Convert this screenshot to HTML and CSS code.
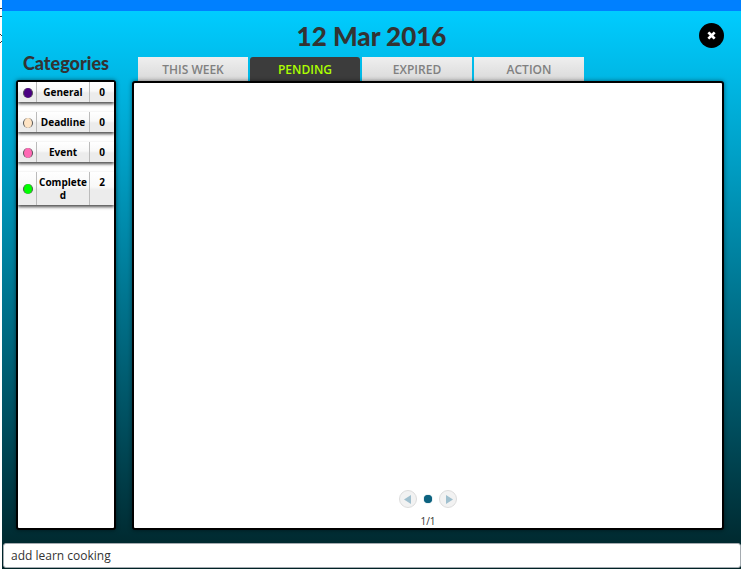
FILE: index.html
```
<!DOCTYPE html>
<html lang="en">
<head>
<meta charset="utf-8">
<title>Task planner</title>
<link rel="stylesheet" href="styles.css">
</head>
<body>
<div class="edge">
  <svg viewBox="0 0 2 60" width="2" height="60"><path d="M0 8.500h2M0 16.500h2M0 34.500h1M0 42.500h1M1.500 35v1M1.500 41v1"/></svg>
</div>
<div class="app">
  <header class="header">
    <h1>12 Mar 2016</h1>
    <button class="close" type="button" aria-label="Close">
      <svg viewBox="0 0 25 25" width="25" height="25"><circle cx="12.5" cy="12.5" r="12.5"/><path d="M9.500 9.500l6 6M15.500 9.500l-6 6"/></svg>
    </button>
  </header>
  <main class="content">
    <section class="side">
      <h2>Categories</h2>
      <div class="box">
        <table class="categories">
          <tbody>
            <tr><td><i class="dot general"></i></td><th scope="row">General</th><td>0</td></tr>
            <tr><td><i class="dot deadline"></i></td><th scope="row">Deadline</th><td>0</td></tr>
            <tr><td><i class="dot event"></i></td><th scope="row">Event</th><td>0</td></tr>
            <tr><td><i class="dot completed"></i></td><th scope="row">Completed</th><td>2</td></tr>
          </tbody>
        </table>
      </div>
    </section>
    <section class="tasks">
      <nav class="tabs">
        <button type="button">THIS WEEK</button>
        <button type="button" class="active">PENDING</button>
        <button type="button">EXPIRED</button>
        <button type="button">ACTION</button>
      </nav>
      <div class="box panel">
        <div class="pager">
          <button type="button" aria-label="Previous page"><svg viewBox="0 0 16 16"><path d="M11 4v9L4 8.500z"/></svg></button>
          <button type="button" class="page" aria-label="Page 1"></button>
          <button type="button" aria-label="Next page"><svg viewBox="0 0 16 16"><path d="M6 4v9l7-4.500z"/></svg></button>
        </div>
        <p class="count">1/1</p>
      </div>
    </section>
  </main>
  <div class="prompt">
    <input class="command" type="text" aria-label="Command" value="add learn cooking">
  </div>
</div>
</body>
</html>
```
FILE: styles.css
```
* {
  box-sizing: border-box;
}

body {
  margin: 0;
  min-height: 100vh;
  display: flex;
  background: #fff;
  font-family: "Open Sans", "Noto Sans", sans-serif;
  color: #333;
}

button {
  border: 0;
  padding: 0;
  background: none;
  font: inherit;
}

svg {
  display: block;
}

.edge {
  width: 2px;
  flex: none;
}

.edge path {
  fill: none;
  stroke: #333;
}

.app {
  flex: 1;
  min-width: 0;
  display: flex;
  flex-direction: column;
  border-top: 11px solid #0080ff;
  background: linear-gradient(#00ccff, #002226) padding-box;
}

.header {
  display: grid;
  grid-template-columns: 25px 1fr 25px;
  align-items: center;
  height: 46px;
  padding: 4px 17px 0;
}

h1,
h2 {
  margin: 0;
  font-family: Lato, "Open Sans", sans-serif;
  font-weight: 900;
  text-align: center;
}

h1 {
  grid-column: 2;
  font-size: 26px;
  line-height: 32px;
}

.close {
  margin-top: -2px;
}

.close svg {
  stroke: #fff;
  stroke-width: 3.5;
  stroke-linecap: square;
}

.close circle {
  fill: #000;
  stroke: none;
}

.close path {
  transform: scale(0.75);
  transform-origin: center;
}

.content {
  flex: 1;
  display: grid;
  grid-template-columns: 100px 1fr;
  gap: 16px;
  padding: 0 17px 13px 14px;
}

.side,
.tasks {
  display: flex;
  flex-direction: column;
  min-width: 0;
}

h2 {
  font-size: 18px;
  line-height: 13px;
  padding-bottom: 10px;
}

.box {
  flex: 1;
  background: #fff;
  border: 2px solid #000;
  border-radius: 3px;
  box-shadow: 0 0 4px rgba(0, 0, 0, 0.5);
}

.categories {
  width: 100%;
  table-layout: fixed;
  border-collapse: separate;
  border-spacing: 0 10px;
  margin: -10px 0;
  font-size: 10px;
  font-weight: 700;
  line-height: 13px;
  color: #000;
  text-align: center;
}

.categories tr {
  box-shadow: 0 2px 3px rgba(0, 0, 0, 0.7);
}

.categories td,
.categories th {
  padding: 4px 1px 3px;
  vertical-align: top;
  overflow-wrap: anywhere;
  background: linear-gradient(#fff, #f8f8f8 45%, #ececec 55%, #ececec);
  border-right: 1px solid #bbb;
}

.categories td:first-child {
  width: 19px;
  padding-left: 3px;
  vertical-align: middle;
}

.categories td:last-child {
  width: 24px;
  border-right: 0;
}

.dot {
  display: block;
  width: 10px;
  height: 10px;
  margin: 0 auto;
  border: solid #555;
  border-width: 0 1px;
  border-radius: 50%;
}

.general {
  background: #4b0082;
}

.deadline {
  background: #ffe4c4;
}

.event {
  background: #ff69b4;
}

.completed {
  background: #0f0;
}

.tabs {
  display: flex;
  gap: 2px;
  padding-left: 6px;
}

.tabs button {
  width: 110px;
  height: 24px;
  background: linear-gradient(#efefef, #d9d9d9);
  color: #808080;
  font-size: 12px;
  font-weight: 600;
}

.tabs .active {
  background: #3c3c3c;
  border-radius: 3px 3px 0 0;
  color: #adff00;
}

.panel {
  display: flex;
  flex-direction: column;
  justify-content: flex-end;
  align-items: center;
}

.pager {
  display: flex;
  align-items: center;
  gap: 7px;
}

.pager button {
  border: 1px solid #ddd;
  border-radius: 50%;
  background: #f2f2f2;
}

.pager svg {
  width: 16px;
  height: 16px;
  fill: #9fbfce;
}

.pager .page {
  width: 8px;
  height: 8px;
  border: 0;
  background: #0c627f;
  box-shadow: 0 0 1px #0c627f;
}

.count {
  margin: 6px 0 0;
  font-size: 10px;
  line-height: 14px;
}

.prompt {
  padding: 0 0 1px 1px;
}

.command {
  display: block;
  width: 100%;
  height: 25px;
  padding: 0 7px;
  border: 1px solid #a5abb0;
  border-radius: 3px;
  background: #fff;
  color: #333;
  font: 12px "Open Sans", "Noto Sans", sans-serif;
}
```
